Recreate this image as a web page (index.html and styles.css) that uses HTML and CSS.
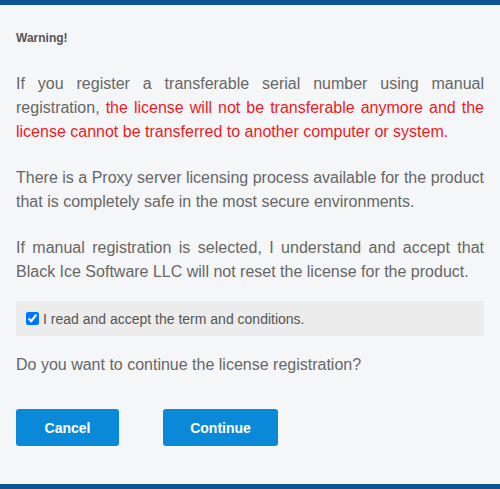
FILE: index.html
```html
<!DOCTYPE html>
<html lang="en">
<head>
<meta charset="utf-8">
<link rel="stylesheet" href="styles.css">
</head>
<body>
<div class="dialog">
  <div class="content">
    <div class="title">Warning!</div>
    <p class="para">If you register a transferable serial number using manual registration, <span class="red">the license will not be transferable anymore and the license cannot be transferred to another computer or system.</span></p>
    <p class="para">There is a Proxy server licensing process available for the product that is completely safe in the most secure environments.</p>
    <p class="para">If manual registration is selected, I understand and accept that Black Ice Software LLC will not reset the license for the product.</p>
    <label class="accept"><input type="checkbox" checked class="check"><span>I read and accept the term and conditions.</span></label>
    <p class="question">Do you want to continue the license registration?</p>
    <div class="buttons">
      <button class="btn btn-cancel">Cancel</button>
      <button class="btn btn-continue">Continue</button>
    </div>
  </div>
</div>
</body>
</html>
```
FILE: styles.css
```css
html, body {
  margin: 0;
  padding: 0;
  background: #f5f6f8;
}
.dialog {
  box-sizing: border-box;
  height: 489px;
  border-top: 5px solid #0e5490;
  border-bottom: 5px solid #0e5490;
  background: #f5f6f8;
  font-family: "Liberation Sans", Arial, sans-serif;
  color: #666;
}
.content {
  padding: 26px 16px 0 16px;
  display: flex;
  flex-direction: column;
}
.title {
  font-size: 12px;
  line-height: 14px;
  font-weight: bold;
  color: #555;
  margin-bottom: 27px;
}
.para {
  margin: 0 0 22px 0;
  font-size: 16px;
  line-height: 24px;
  text-align: justify;
}
.para:nth-of-type(3) {
  margin-bottom: 17px;
}
.red {
  color: #ec1c24;
}
.accept {
  display: flex;
  align-items: center;
  height: 35px;
  background: #ececec;
  padding-left: 10px;
  font-size: 14px;
  color: #555;
}
.check {
  margin: 0 4px 0 0;
  width: 13px;
  height: 13px;
}
.question {
  margin: 17px 0 0 0;
  font-size: 16px;
  line-height: 24px;
}
.buttons {
  display: flex;
  gap: 44px;
  margin-top: 32px;
}
.btn {
  height: 37px;
  border: none;
  border-radius: 3px;
  background: #0a89d8;
  color: #fff;
  font-family: "Liberation Sans", Arial, sans-serif;
  font-size: 14px;
  font-weight: bold;
  padding: 0;
}
.btn-cancel {
  width: 103px;
}
.btn-continue {
  width: 115px;
}
```
